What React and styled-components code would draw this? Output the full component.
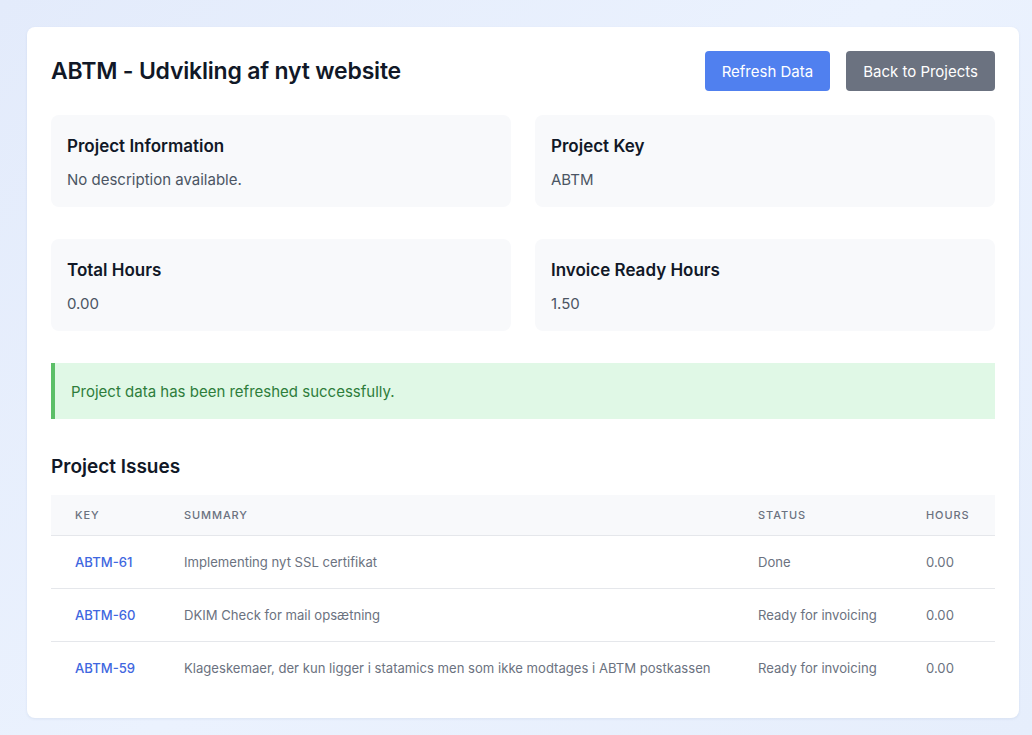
import React from "react"
import styled, { createGlobalStyle } from "styled-components"

const GlobalStyle = createGlobalStyle`
  html, body {
    margin: 0;
    padding: 0;
  }
  body {
    min-height: 735px;
    background: linear-gradient(135deg, #e3ebfb 0%, #ebf2fe 50%, #e6eefc 100%);
    font-family: Inter, "Noto Sans", sans-serif;
    color: #111827;
  }
`

const Page = styled.div`
  padding: 27px 13px 17px 27px;
`

const Card = styled.div`
  background: #fff;
  border-radius: 8px;
  box-shadow: 0 1px 3px rgba(30, 60, 120, 0.08);
  padding: 24px;
`

const Header = styled.div`
  display: flex;
  align-items: center;
  justify-content: space-between;
  height: 40px;
  margin-bottom: 24px;
`

const Title = styled.h1`
  margin: 0;
  font-size: 23px;
  font-weight: 600;
  letter-spacing: -0.2px;
  color: #111827;
`

const Actions = styled.div`
  display: flex;
  gap: 16px;
`

const Button = styled.button`
  height: 40px;
  padding: 0 17px;
  border: none;
  border-radius: 4px;
  font-family: inherit;
  font-size: 15px;
  color: #fff;
  background: ${(p) => (p.$variant === "secondary" ? "#6b7280" : "#5080ef")};
  cursor: pointer;
`

const InfoGrid = styled.div`
  display: grid;
  grid-template-columns: 1fr 1fr;
  column-gap: 24px;
  row-gap: 32px;
  margin-bottom: 32px;
`

const InfoBox = styled.div`
  background: #f8f9fb;
  border-radius: 8px;
  padding: 21px 16px 16px;
  height: 92px;
  box-sizing: border-box;
`

const InfoLabel = styled.h3`
  margin: 0 0 14px;
  font-size: 17px;
  font-weight: 600;
  color: #111827;
`

const InfoValue = styled.p`
  margin: 0;
  font-size: 15px;
  color: #4b5563;
`

const Alert = styled.div`
  background: #e0f8e6;
  border-left: 4px solid #5cbf68;
  padding: 0 16px;
  height: 56px;
  display: flex;
  align-items: center;
  font-size: 15px;
  color: #2e7d3b;
  margin-bottom: 36px;
`

const SectionTitle = styled.h2`
  margin: 0 0 17px;
  font-size: 19px;
  font-weight: 600;
  color: #111827;
`

const Table = styled.table`
  width: 100%;
  border-collapse: collapse;
  table-layout: fixed;
`

const Th = styled.th`
  box-sizing: border-box;
  text-align: left;
  height: 40px;
  padding: 0 24px;
  background: #f8f9fb;
  border-bottom: 1px solid #e5e7eb;
  font-size: 11px;
  font-weight: 500;
  letter-spacing: 0.9px;
  text-transform: uppercase;
  color: #6b7280;
  width: ${(p) => p.$w || "auto"};
`

const Row = styled.tr`
  & + & td {
    border-top: 1px solid #e5e7eb;
  }
`

const Td = styled.td`
  height: 52px;
  padding: 0 24px;
  font-size: 13.1px;
  color: #6b7280;
  white-space: nowrap;
`

const KeyLink = styled.a`
  color: #3f67e0;
  font-weight: 500;
  text-decoration: none;
`

const info = [
  ["Project Information", "No description available."],
  ["Project Key", "ABTM"],
  ["Total Hours", "0.00"],
  ["Invoice Ready Hours", "1.50"],
]

const issues = [
  ["ABTM-61", "Implementing nyt SSL certifikat", "Done", "0.00"],
  ["ABTM-60", "DKIM Check for mail opsætning", "Ready for invoicing", "0.00"],
  [
    "ABTM-59",
    "Klageskemaer, der kun ligger i statamics men som ikke modtages i ABTM postkassen",
    "Ready for invoicing",
    "0.00",
  ],
]

export default function App() {
  return (
    <Page>
      <GlobalStyle />
      <Card>
        <Header>
          <Title>ABTM - Udvikling af nyt website</Title>
          <Actions>
            <Button>Refresh Data</Button>
            <Button $variant="secondary">Back to Projects</Button>
          </Actions>
        </Header>

        <InfoGrid>
          {info.map(([label, value]) => (
            <InfoBox key={label}>
              <InfoLabel>{label}</InfoLabel>
              <InfoValue>{value}</InfoValue>
            </InfoBox>
          ))}
        </InfoGrid>

        <Alert>Project data has been refreshed successfully.</Alert>

        <SectionTitle>Project Issues</SectionTitle>
        <Table>
          <thead>
            <tr>
              <Th $w="109px">Key</Th>
              <Th>Summary</Th>
              <Th $w="168px">Status</Th>
              <Th $w="93px">Hours</Th>
            </tr>
          </thead>
          <tbody>
            {issues.map(([key, summary, status, hours]) => (
              <Row key={key}>
                <Td>
                  <KeyLink href="#">{key}</KeyLink>
                </Td>
                <Td>{summary}</Td>
                <Td>{status}</Td>
                <Td>{hours}</Td>
              </Row>
            ))}
          </tbody>
        </Table>
      </Card>
    </Page>
  )
}
